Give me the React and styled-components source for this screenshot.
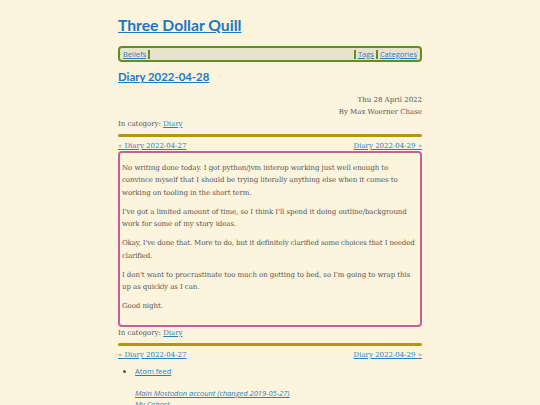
import React from "react";
import styled, { createGlobalStyle } from "styled-components";

const Global = createGlobalStyle`
  html, body { margin: 0; padding: 0; background: #fcf4dc; }
  body { font-family: "DejaVu Serif", serif; color: #555; }
`;

const Page = styled.div`
  width: 304px;
  margin: 0 auto;
  padding-top: 14px;
`;

const SiteTitle = styled.h1`
  margin: 0 0 10px;
  font-family: Lato, sans-serif;
  font-weight: 700;
  font-size: 15.7px;
  line-height: 22px;
  a { color: #1b78c4; }
`;

const NavBar = styled.nav`
  display: flex;
  align-items: center;
  height: 12px;
  border: 2px solid #5f8f1f;
  border-radius: 4px;
  background: #e9e2cd;
  padding: 0 1px;
  font-family: "Open Sans", sans-serif;
  font-size: 7.5px;
`;

const NavLink = styled.a`
  color: #2a7ec1;
  padding: 0 2px;
  line-height: 9px;
  border-left: ${(p) => (p.$sepLeft ? "2px solid #5f8f1f" : "none")};
  border-right: ${(p) => (p.$sepRight ? "2px solid #5f8f1f" : "none")};
`;

const Spacer = styled.div`
  flex: 1;
`;

const PostTitle = styled.h2`
  margin: 7px 0 0;
  font-family: Lato, sans-serif;
  font-weight: 700;
  font-size: 11.4px;
  line-height: 16px;
  a { color: #1b78c4; }
`;

const Meta = styled.div`
  text-align: right;
  font-size: 7px;
  line-height: 12px;
  margin-top: 9px;
`;

const Small = styled.div`
  font-size: 7px;
  line-height: 12px;
  a { color: #2a7ec1; }
`;

const Rule = styled.hr`
  border: none;
  height: 3px;
  border-radius: 2px;
  background: #b8950f;
  margin: 4px 0 4px;
`;

const PrevNext = styled.div`
  display: flex;
  justify-content: space-between;
  font-size: 7px;
  line-height: 11px;
  margin-bottom: -1px;
  a { color: #2a7ec1; }
`;

const Article = styled.article`
  border: 2px solid #c65f9b;
  border-radius: 4px;
  padding: 2px 2px 6px;
  margin: 0;
`;

const Para = styled.p`
  margin: 6.5px 0;
  font-size: 7px;
  line-height: 12.5px;
  letter-spacing: ${(p) => p.$spacing || "-0.06px"};
`;

const List = styled.ul`
  margin: 5px 0 0;
  padding-left: 17px;
  font-family: "Open Sans", sans-serif;
  font-size: 7.5px;
  line-height: 12px;
  li { color: #555; }
  a { color: #2a7ec1; }
`;

const SubList = styled.div`
  margin-top: 11px;
  padding-left: 17px;
  font-family: "Open Sans", sans-serif;
  font-style: italic;
  font-size: 7.5px;
  line-height: 11px;
  a { color: #2a7ec1; display: block; }
`;

export default function App() {
  return (
    <>
      <Global />
      <Page>
        <SiteTitle><a href="#">Three Dollar Quill</a></SiteTitle>
        <NavBar>
          <NavLink href="#" $sepRight>Beliefs</NavLink>
          <Spacer />
          <NavLink href="#" $sepLeft>Tags</NavLink>
          <NavLink href="#" $sepLeft>Categories</NavLink>
        </NavBar>
        <PostTitle><a href="#">Diary 2022-04-28</a></PostTitle>
        <Meta>
          <div>Thu 28 April 2022</div>
          <div>By Max Woerner Chase</div>
        </Meta>
        <Small>In category: <a href="#">Diary</a></Small>
        <Rule />
        <PrevNext>
          <a href="#">« Diary 2022-04-27</a>
          <a href="#">Diary 2022-04-29 »</a>
        </PrevNext>
        <Article>
          <Para>No writing done today. I got python/jvm interop working just well enough to convince myself that I should be trying literally anything else when it comes to working on tooling in the short term.</Para>
          <Para>I've got a limited amount of time, so I think I'll spend it doing outline/background work for some of my story ideas.</Para>
          <Para $spacing="-0.13px">Okay, I've done that. More to do, but it definitely clarified some choices that I needed clarified.</Para>
          <Para>I don't want to procrastinate too much on getting to bed, so I'm going to wrap this up as quickly as I can.</Para>
          <Para>Good night.</Para>
        </Article>
        <Small>In category: <a href="#">Diary</a></Small>
        <Rule />
        <PrevNext>
          <a href="#">« Diary 2022-04-27</a>
          <a href="#">Diary 2022-04-29 »</a>
        </PrevNext>
        <List>
          <li><a href="#">Atom feed</a></li>
        </List>
        <SubList>
          <a href="#">Main Mostodon account (changed 2019-05-27)</a>
          <a href="#">My Cohost</a>
        </SubList>
      </Page>
    </>
  );
}
